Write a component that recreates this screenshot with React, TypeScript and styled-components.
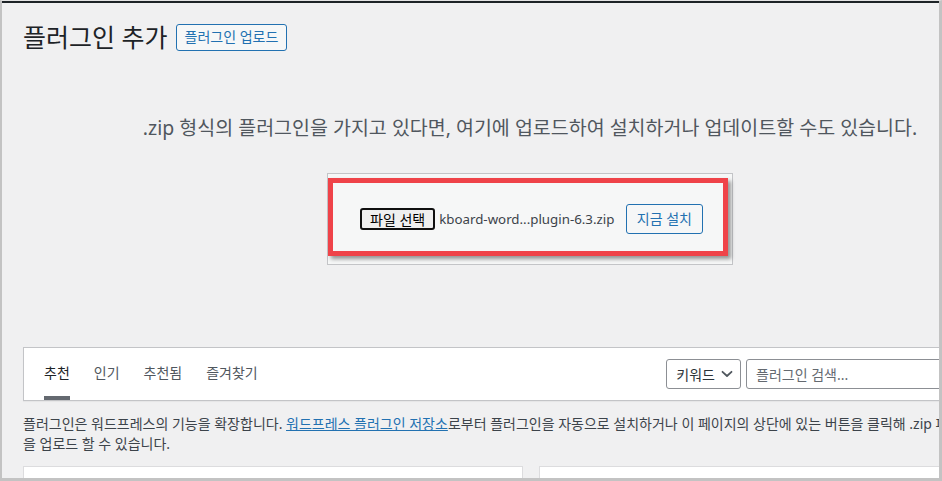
import React from 'react';
import styled, { createGlobalStyle } from 'styled-components';

const GlobalStyle = createGlobalStyle`
  html, body {
    margin: 0;
    padding: 0;
    background: #f0f0f1;
  }
  body {
    font-family: "Noto Sans", "Noto Sans CJK KR", sans-serif;
  }
`;

const font = `"Noto Sans", "Noto Sans CJK KR", sans-serif`;

const Frame = styled.div`
  width: 942px;
  height: 481px;
  box-sizing: border-box;
  border-top: 1px solid #e4e4e4;
  border-left: 2px solid #c3c3c3;
  border-right: 3px solid #c3c3c3;
  border-bottom: 3px solid #c3c3c3;
  background: #f0f0f1;
  overflow: hidden;
`;

const Screen = styled.div`
  height: 100%;
  box-sizing: border-box;
  border-top: 2px solid #1d2327;
  overflow: hidden;
`;

const Wrap = styled.div`
  width: 1014px;
  margin-left: 21px;
  display: flex;
  flex-direction: column;
`;

const Header = styled.div`
  display: flex;
  align-items: center;
  height: 30px;
  margin-top: 19px;
`;

const Title = styled.h1`
  margin: 0;
  font-family: ${font};
  font-size: 25px;
  font-weight: 400;
  line-height: 30px;
  color: #1d2327;
`;

const OutlineButton = styled.button<{ height: number; pad: number }>`
  box-sizing: border-box;
  height: ${p => p.height}px;
  padding: 0 ${p => p.pad}px;
  border: 1px solid #2271b1;
  border-radius: 3px;
  background: #f6f7f7;
  color: #2271b1;
  font-family: ${font};
  font-size: 14px;
  line-height: 1;
  cursor: pointer;
`;

const PageAction = styled(OutlineButton)`
  margin-left: 8px;
`;

const Help = styled.p`
  margin: 62px 0 0;
  font-family: ${font};
  font-size: 19.5px;
  line-height: 28px;
  color: #50575e;
  text-align: center;
`;

const UploadRow = styled.div`
  display: flex;
  justify-content: center;
  margin-top: 31px;
`;

const UploadForm = styled.form`
  position: relative;
  box-sizing: border-box;
  width: 406px;
  height: 92px;
  padding: 0 29px 0 32px;
  display: flex;
  align-items: center;
  justify-content: space-between;
  border: 1px solid #c3c4c7;
  background: #f6f7f7;
`;

const FileField = styled.div`
  display: flex;
  align-items: center;
  gap: 4px;
`;

const FileButton = styled.span`
  box-sizing: border-box;
  height: 22px;
  padding: 0 8px;
  display: flex;
  align-items: center;
  border: 2px solid #101010;
  border-radius: 3px;
  background: #efefef;
  color: #000;
  font-family: ${font};
  font-size: 14px;
`;

const FileName = styled.span`
  font-family: ${font};
  font-size: 13.3px;
  color: #3c434a;
`;

const Highlight = styled.div`
  position: absolute;
  left: 0;
  top: 4px;
  width: 400px;
  height: 78px;
  box-sizing: border-box;
  border: 5px solid #ef4349;
  box-shadow: 3px 3px 4px rgba(0, 0, 0, 0.4);
  pointer-events: none;
`;

const FilterBar = styled.div`
  margin-top: 82px;
  box-sizing: border-box;
  height: 54px;
  padding: 0 10px;
  display: flex;
  justify-content: space-between;
  align-items: stretch;
  border: 1px solid #c3c4c7;
  background: #fff;
  box-shadow: 0 1px 1px rgba(0, 0, 0, 0.04);
`;

const Tabs = styled.ul`
  margin: 0 0 0 10px;
  padding: 0;
  list-style: none;
  display: flex;
  gap: 24px;
`;

const Tab = styled.li<{ current?: boolean }>`
  display: flex;
  align-items: center;
  box-sizing: border-box;
  border-bottom: 4px solid ${p => (p.current ? '#646970' : 'transparent')};
  font-family: ${font};
  font-size: 14px;
  color: ${p => (p.current ? '#1d2327' : '#50575e')};
`;

const SearchGroup = styled.div`
  display: flex;
  align-items: center;
  gap: 5px;
`;

const TypeSelect = styled.div`
  box-sizing: border-box;
  height: 30px;
  padding: 0 7px 0 9px;
  display: flex;
  align-items: center;
  gap: 6px;
  border: 1px solid #8c8f94;
  border-radius: 3px;
  background: #fff;
  font-family: ${font};
  font-size: 14px;
  color: #2c3338;
`;

const SearchInput = styled.input`
  box-sizing: border-box;
  width: 280px;
  height: 30px;
  padding: 0 9px;
  border: 1px solid #8c8f94;
  border-radius: 3px;
  background: #fff;
  font-family: ${font};
  font-size: 14px;
  color: #2c3338;
  &::placeholder {
    color: #646970;
  }
`;

const Intro = styled.p`
  margin: 13px 0 0;
  font-family: ${font};
  font-size: 14px;
  line-height: 20px;
  color: #3c434a;
  white-space: nowrap;
  a {
    color: #2271b1;
    text-decoration: underline;
  }
`;

const Cards = styled.div`
  margin-top: 12px;
  display: grid;
  grid-template-columns: 500px 500px;
  gap: 16px;
`;

const Card = styled.div`
  height: 200px;
  box-sizing: border-box;
  border: 1px solid #dcdcde;
  background: #fff;
`;

const Chevron = () => (
  <svg width="12" height="8" viewBox="0 0 12 8" fill="none">
    <path d="M1.5 1.8 L6 6 L10.5 1.8" stroke="#50575e" strokeWidth="1.8" strokeLinecap="round" strokeLinejoin="round" />
  </svg>
);

const tabs = ['추천', '인기', '추천됨', '즐겨찾기'];

export default function App() {
  return (
    <>
      <GlobalStyle />
      <Frame>
        <Screen>
          <Wrap>
            <Header>
              <Title>플러그인 추가</Title>
              <PageAction type="button" height={27} pad={8}>
                플러그인 업로드
              </PageAction>
            </Header>

            <Help>.zip 형식의 플러그인을 가지고 있다면, 여기에 업로드하여 설치하거나 업데이트할 수도 있습니다.</Help>

            <UploadRow>
              <UploadForm onSubmit={e => e.preventDefault()}>
                <FileField>
                  <FileButton>파일 선택</FileButton>
                  <FileName>kboard-word...plugin-6.3.zip</FileName>
                </FileField>
                <OutlineButton type="button" height={30} pad={10}>
                  지금 설치
                </OutlineButton>
                <Highlight />
              </UploadForm>
            </UploadRow>

            <FilterBar>
              <Tabs>
                {tabs.map((t, i) => (
                  <Tab key={t} current={i === 0}>
                    {t}
                  </Tab>
                ))}
              </Tabs>
              <SearchGroup>
                <TypeSelect>
                  키워드
                  <Chevron />
                </TypeSelect>
                <SearchInput placeholder="플러그인 검색..." />
              </SearchGroup>
            </FilterBar>

            <Intro>
              플러그인은 워드프레스의 기능을 확장합니다. <a href="#">워드프레스 플러그인 저장소</a>로부터 플러그인을 자동으로
              설치하거나 이 페이지의 상단에 있는 버튼을 클릭해 .zip 파일
              <br />을 업로드 할 수 있습니다.
            </Intro>

            <Cards>
              <Card />
              <Card />
            </Cards>
          </Wrap>
        </Screen>
      </Frame>
    </>
  );
}
